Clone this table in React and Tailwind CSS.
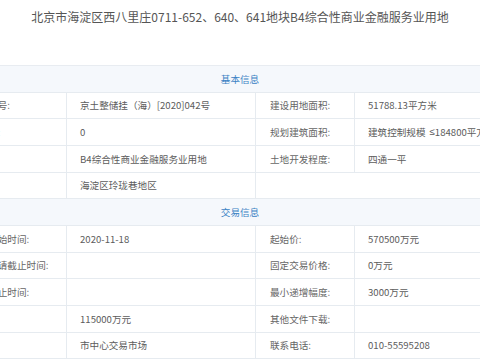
import React from "react";

const Cell = ({ children, last, label, span }) => (
  <div
    className={
      "flex items-center whitespace-nowrap overflow-hidden " +
      (label ? "pl-[14px] text-[#666] " : "pl-[13px] text-[#5c5c5c] ") +
      (last ? "" : "border-r border-[#e6ebf0] ") +
      (span ? "col-span-2" : "")
    }
  >
    {children}
  </div>
);

const Row = ({ children }) => (
  <div className="grid grid-cols-[112px_189px_99px_170px] h-[26.67px] border-b border-[#e6ebf0] text-[9.6px]">
    {children}
  </div>
);

const Header = ({ children }) => (
  <div className="h-[26.67px] border-b border-[#e6ebf0] bg-[#f5f8fc] flex items-center justify-center text-[9.6px] text-[#3b82c4]">
    {children}
  </div>
);

export default function App() {
  return (
    <div className="w-[480px] h-[360px] overflow-hidden bg-white font-['Noto_Sans_CJK_SC','Noto_Sans',sans-serif]">
      <div className="h-[65px] pt-[9px] text-center text-[12px] leading-[16px] text-[#555]">
        北京市海淀区西八里庄0711-652、640、641地块B4综合性商业金融服务业用地
      </div>
      <div className="ml-[-45px] w-[570px] border-t border-[#e8ecf1]">
        <Header>基本信息</Header>
        <Row>
          <Cell label>宗地编号:</Cell>
          <Cell>京土整储挂（海）[2020]042号</Cell>
          <Cell label>建设用地面积:</Cell>
          <Cell last>51788.13平方米</Cell>
        </Row>
        <Row>
          <Cell label>容积率:</Cell>
          <Cell>0</Cell>
          <Cell label>规划建筑面积:</Cell>
          <Cell last>
            <span>建筑控制规模</span>
            <span className="ml-[4px] font-['Liberation_Sans',sans-serif]">≤</span>
            <span>184800平方米</span>
          </Cell>
        </Row>
        <Row>
          <Cell label>用途:</Cell>
          <Cell>B4综合性商业金融服务业用地</Cell>
          <Cell label>土地开发程度:</Cell>
          <Cell last>四通一平</Cell>
        </Row>
        <Row>
          <Cell label>位置:</Cell>
          <Cell>海淀区玲珑巷地区</Cell>
          <Cell last span></Cell>
        </Row>
        <Header>交易信息</Header>
        <Row>
          <Cell label>挂牌开始时间:</Cell>
          <Cell>2020-11-18</Cell>
          <Cell label>起始价:</Cell>
          <Cell last>570500万元</Cell>
        </Row>
        <Row>
          <Cell label>竞买申请截止时间:</Cell>
          <Cell></Cell>
          <Cell label>固定交易价格:</Cell>
          <Cell last>0万元</Cell>
        </Row>
        <Row>
          <Cell label>挂牌截止时间:</Cell>
          <Cell></Cell>
          <Cell label>最小递增幅度:</Cell>
          <Cell last>3000万元</Cell>
        </Row>
        <Row>
          <Cell label>押金:</Cell>
          <Cell>115000万元</Cell>
          <Cell label>其他文件下载:</Cell>
          <Cell last></Cell>
        </Row>
        <Row>
          <Cell label>地点:</Cell>
          <Cell>市中心交易市场</Cell>
          <Cell label>联系电话:</Cell>
          <Cell last>010-55595208</Cell>
        </Row>
      </div>
    </div>
  );
}
